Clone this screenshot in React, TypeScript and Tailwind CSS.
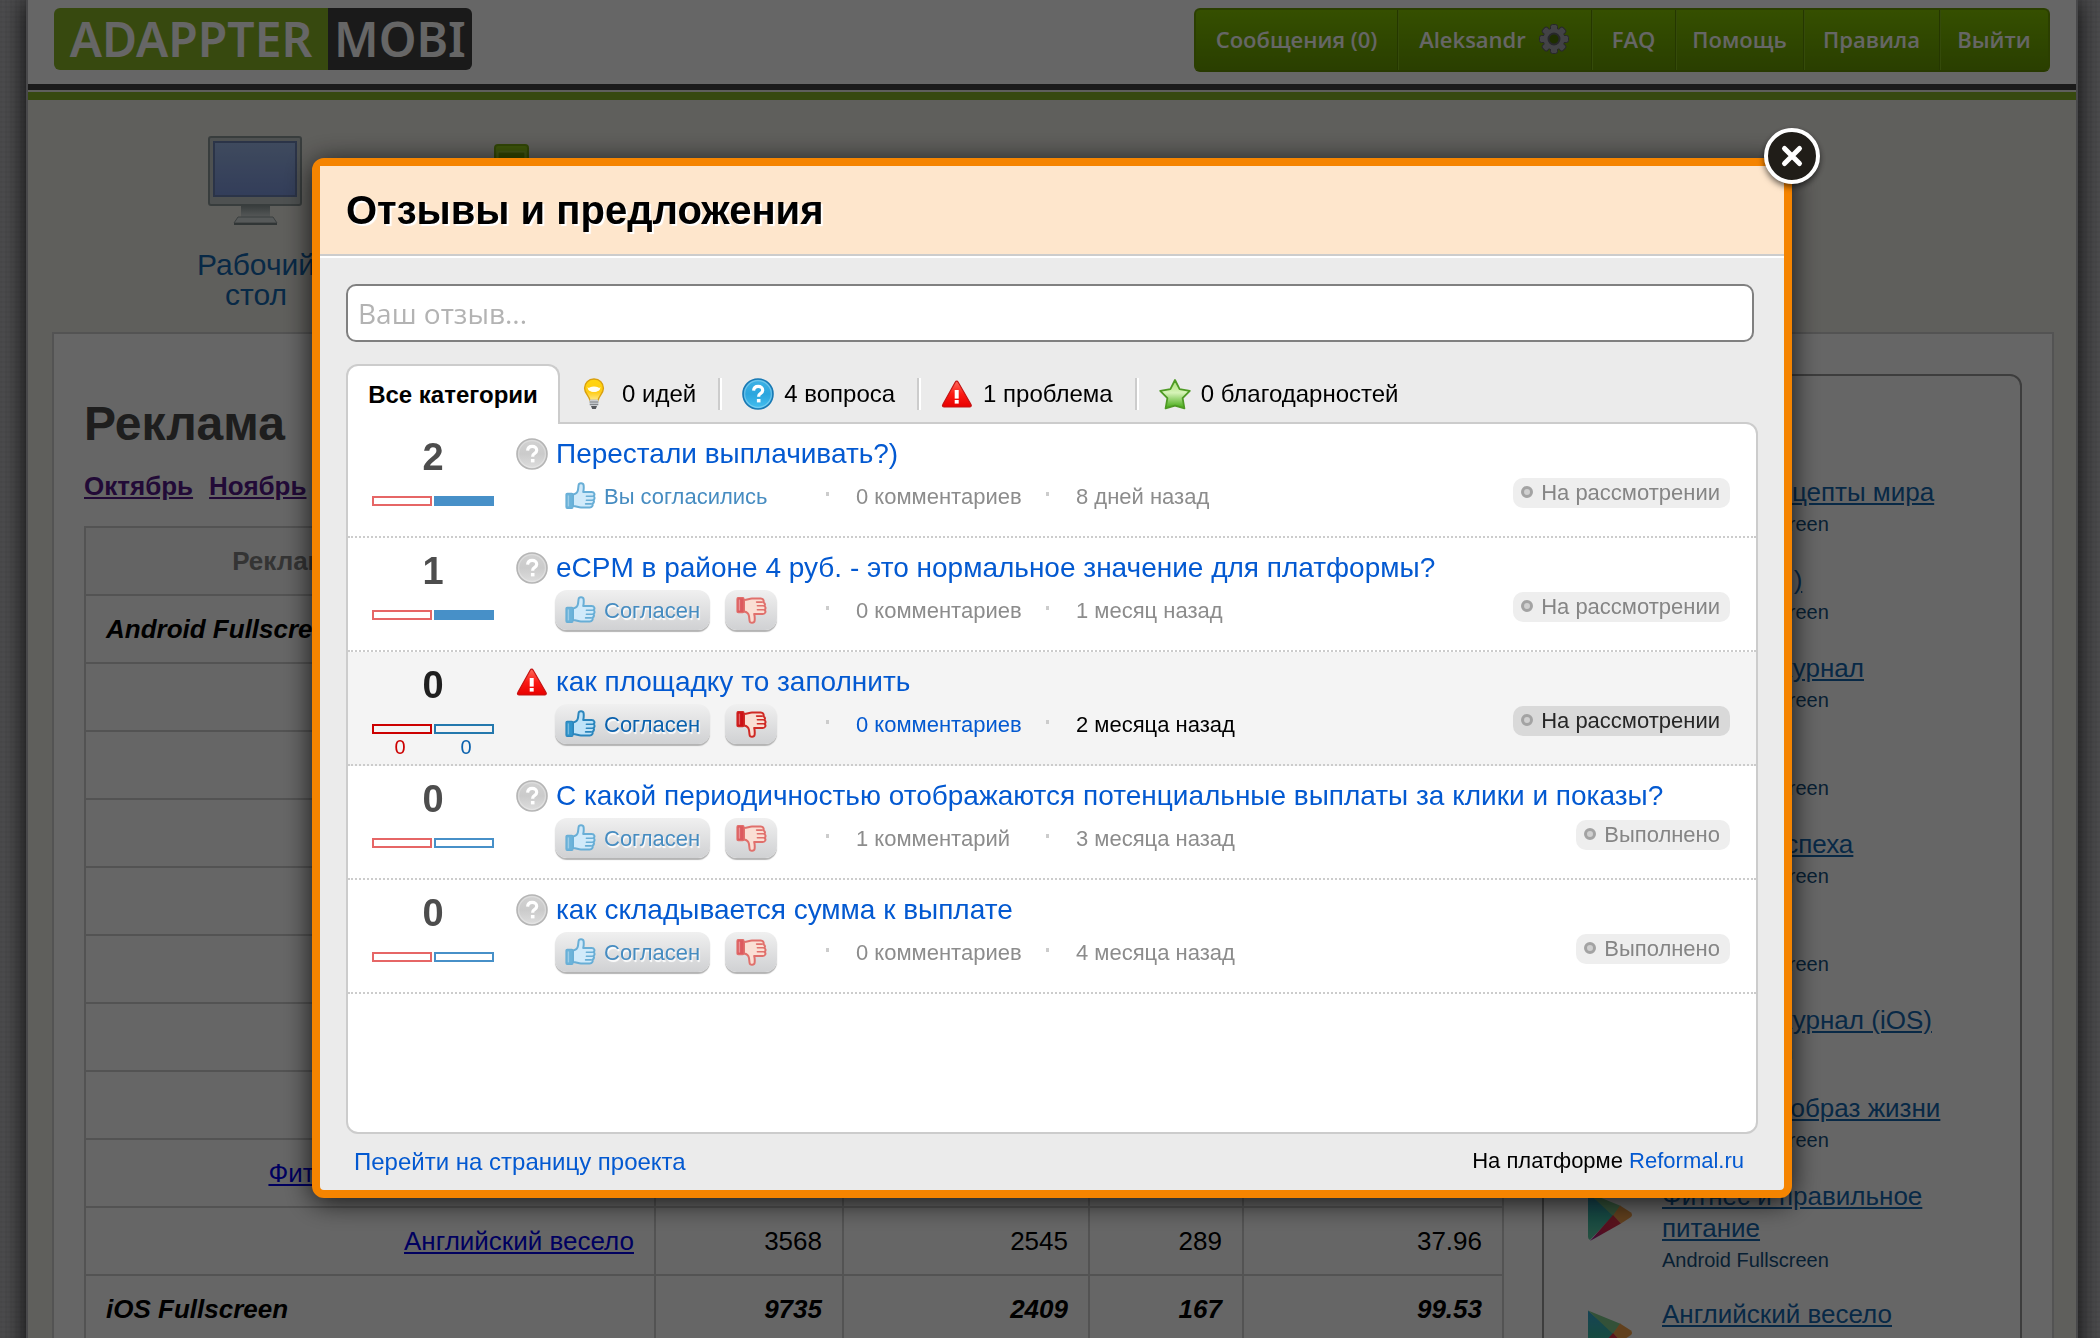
import { useState } from 'react';

type Category = 'question' | 'problem';

type Review = {
  votes: number;
  category: Category;
  title: string;
  comments: string;
  date: string;
  status: string;
  agreed?: boolean;
  active?: boolean;
};

const reviews: Review[] = [
  { votes: 2, category: 'question', title: 'Перестали выплачивать?)', comments: '0 комментариев', date: '8 дней назад', status: 'На рассмотрении', agreed: true },
  { votes: 1, category: 'question', title: 'eCPM в районе 4 руб. - это нормальное значение для платформы?', comments: '0 комментариев', date: '1 месяц назад', status: 'На рассмотрении' },
  { votes: 0, category: 'problem', title: 'как площадку то заполнить', comments: '0 комментариев', date: '2 месяца назад', status: 'На рассмотрении', active: true },
  { votes: 0, category: 'question', title: 'С какой периодичностью отображаются потенциальные выплаты за клики и показы?', comments: '1 комментарий', date: '3 месяца назад', status: 'Выполнено' },
  { votes: 0, category: 'question', title: 'как складывается сумма к выплате', comments: '0 комментариев', date: '4 месяца назад', status: 'Выполнено' },
];

const apps = [
  { name: 'Лучшие рецепты мира', platform: 'Android Fullscreen' },
  { name: 'Анекдоты :)', platform: 'Android Fullscreen' },
  { name: 'Женский журнал', platform: 'Android Fullscreen' },
  { name: '', platform: 'Android Fullscreen' },
  { name: 'Секреты успеха', platform: 'Android Fullscreen' },
  { name: '', platform: 'Android Fullscreen' },
  { name: 'Женский журнал (iOS)', platform: 'iOS Fullscreen' },
  { name: 'Здоровый образ жизни', platform: 'Android Fullscreen' },
  { name: 'Фитнес и правильное питание', platform: 'Android Fullscreen' },
  { name: 'Английский весело', platform: 'Android Fullscreen' },
];

// Статистика по площадкам: показы, клики и т.д.
const stats = [
  { name: '', values: ['', '', '', ''] },
  { name: '', values: ['', '', '', ''] },
  { name: '', values: ['', '', '', ''] },
  { name: '', values: ['', '', '', ''] },
  { name: '', values: ['', '', '', ''] },
  { name: '', values: ['', '', '', ''] },
  { name: '', values: ['', '', '', ''] },
  { name: 'Фитнес и правильное питание', values: ['', '', '', ''] },
  { name: 'Английский весело', values: ['3568', '2545', '289', '37.96'] },
];

/* ---------- Иконки ---------- */

function QuestionIcon({ muted = false }: { muted?: boolean }) {
  const id = muted ? 'q-muted' : 'q-blue';
  return (
    <svg className="w-8 h-8 shrink-0" viewBox="0 0 32 32" aria-hidden="true">
      <defs>
        <linearGradient id={id} x1="0" y1="0" x2="0" y2="1">
          <stop offset="0" stopColor={muted ? '#d2d2d2' : '#3fb4e6'} />
          <stop offset="0.5" stopColor={muted ? '#cbcbcb' : '#2ba5de'} />
          <stop offset="1" stopColor={muted ? '#dedede' : '#45c0f0'} />
        </linearGradient>
      </defs>
      <circle cx="16" cy="16" r="15" fill={`url(#${id})`} stroke={muted ? '#b5b5b5' : '#1879b4'} strokeWidth="1.6" />
      <circle cx="16" cy="16" r="13.4" fill="none" stroke="#fff" strokeOpacity="0.25" strokeWidth="1.4" />
      <path d="M11.6 12.6c.2-2.700 2-4.200 4.600-4.200 2.600 0 4.500 1.500 4.500 3.800 0 1.700-.9 2.600-2.300 3.500-1.300.8-1.700 1.300-1.700 2.600v.5" fill="none" stroke="#fff" strokeWidth="3.200" />
      <rect x="14.900" y="21" width="3.600" height="3.400" fill="#fff" />
    </svg>
  );
}

function ProblemIcon() {
  return (
    <svg className="w-8 h-8 shrink-0" viewBox="0 0 32 32" aria-hidden="true">
      <defs>
        <linearGradient id="warn" x1="0" y1="0" x2="0" y2="1">
          <stop offset="0" stopColor="#ff6a5a" />
          <stop offset="0.5" stopColor="#fb1a14" />
          <stop offset="1" stopColor="#e80000" />
        </linearGradient>
      </defs>
      <path d="M14.200 4.200c.8-1.400 2.200-1.400 3 0l12.800 22.300c.7 1.300 0 2.500-1.400 2.500H3.200c-1.500 0-2.200-1.200-1.400-2.500z" fill="url(#warn)" stroke="#c31414" strokeWidth="1.200" />
      <rect x="13.700" y="12" width="4" height="8.600" fill="#fff" />
      <rect x="13.700" y="22" width="4" height="3.600" fill="#fff" />
    </svg>
  );
}

function BulbIcon() {
  return (
    <svg className="w-8 h-8 shrink-0" viewBox="0 0 32 32" aria-hidden="true">
      <defs>
        <linearGradient id="bulb" x1="0" y1="0" x2="0" y2="1">
          <stop offset="0" stopColor="#ffd60a" />
          <stop offset="0.6" stopColor="#ffcb14" />
          <stop offset="1" stopColor="#ffe98a" />
        </linearGradient>
      </defs>
      <path d="M16 1c5.600 0 9.400 4 9.400 9.200 0 5.400-4.700 7.600-5.400 12.300h-8C11.300 17.800 6.600 15.600 6.600 10.200 6.600 5 10.400 1 16 1z" fill="url(#bulb)" stroke="#d9a010" strokeWidth="1.400" />
      <path d="M9.600 9c0 3.600 3 5 6.400 5s6.400-1.400 6.400-5c-1.400 1.600-3.400 2.400-6.400 2.400S11 10.600 9.600 9z" fill="#fffbe0" />
      <ellipse cx="16" cy="11" rx="5.600" ry="2.600" fill="#fffdf0" />
      <rect x="11.600" y="21.600" width="8.800" height="6.400" rx="1" fill="#c9ccd0" />
      <path d="M11.600 24h8.800M11.800 26.400h8.400" stroke="#7d8084" strokeWidth="1" />
      <path d="M13 28h6l-1.200 3h-3.600z" fill="#55585c" />
    </svg>
  );
}

function StarIcon() {
  return (
    <svg className="w-8 h-8 shrink-0" viewBox="0 0 32 32" aria-hidden="true">
      <defs>
        <linearGradient id="star" x1="0" y1="0" x2="0" y2="1">
          <stop offset="0" stopColor="#a6e070" />
          <stop offset="0.45" stopColor="#d6f3b8" />
          <stop offset="1" stopColor="#3fa80e" />
        </linearGradient>
      </defs>
      <path d="M16 2l4.600 9.200 10.200 1.600-7.200 7.400 1.800 10.200L16 27.600 6.600 30.400l1.800-10.200L1.200 12.800l10.200-1.600z" fill="url(#star)" stroke="#4e9a24" strokeWidth="1.800" strokeLinejoin="round" />
    </svg>
  );
}

// Большой палец: cuff — манжет, hand — ладонь
function ThumbIcon({ down = false, active = false }: { down?: boolean; active?: boolean }) {
  const cuff = down ? (active ? '#cc1015' : '#dd5a5e') : active ? '#2f94cb' : '#6bb3da';
  const line = down ? (active ? '#cf2a25' : '#e0706c') : active ? '#2b86bd' : '#68aed6';
  const hand = down ? '#fadfd4' : active ? '#bfe3f8' : '#d0eafa';
  return (
    <svg className={down ? 'w-8 h-8 shrink-0 -scale-y-100' : 'w-8 h-8 shrink-0'} viewBox="0 0 32 32" aria-hidden="true">
      <path d="M9 14.400c2.800-.4 4.600-2.200 5-4.600l.6-4.800c.3-2.400 4.600-2.400 5 .2.300 2.600.2 4.600-.4 6.800h8.600c2.600 0 3.400 2.700 1.800 4 1.400 1.200 1.200 3-.2 4 1 1.200.6 3-.9 3.700.6 1.800-.4 3.700-2.700 3.700H17c-3 0-4.600-1.400-8-1.400z" fill={hand} stroke={line} strokeWidth="2" strokeLinejoin="round" />
      <path d="M22.400 16.200h6M22.400 20.200h6M21.600 23.900h5.600" stroke={line} strokeWidth="1.600" strokeLinecap="round" />
      <path d="M2 14.600c0-.8.500-1.200 1.200-1.200h4.600c.8 0 1.200.5 1.200 1.200v12.400c0 .8-.5 1.400-1.200 1.400H3.200c-.7 0-1.200-.5-1.200-1.300z" fill={cuff} stroke={line} strokeWidth="1.200" />
      <path d="M4.400 15.400v11" stroke="#fff" strokeOpacity="0.35" strokeWidth="1.400" />
    </svg>
  );
}

function PlayIcon() {
  return (
    <svg className="w-16 h-16 shrink-0" viewBox="0 0 64 64" aria-hidden="true">
      <defs>
        <linearGradient id="play-left" x1="0" y1="0" x2="0" y2="1">
          <stop offset="0" stopColor="#36a7d8" />
          <stop offset="0.5" stopColor="#38b9a6" />
          <stop offset="1" stopColor="#5fc9a0" />
        </linearGradient>
        <linearGradient id="play-bottom" x1="0" y1="1" x2="1" y2="0">
          <stop offset="0" stopColor="#8a1fa0" />
          <stop offset="0.4" stopColor="#d3234f" />
          <stop offset="1" stopColor="#e63a44" />
        </linearGradient>
      </defs>
      <path d="M10 12.500L36 35 12 60q-2-1-2-3z" fill="url(#play-left)" />
      <path d="M10 12.500L43 26 35 36z" fill="#7fcb8d" />
      <path d="M42 25.500l11 7q2 2.500 0 4.500l-10 6.500-8-8z" fill="#f3a14a" />
      <path d="M35 35l8 8.500L12 61z" fill="url(#play-bottom)" />
    </svg>
  );
}

function DesktopIcon() {
  return (
    <svg className="w-24 h-24" viewBox="0 0 96 96" aria-hidden="true">
      <defs>
        <linearGradient id="screen" x1="0" y1="0" x2="0" y2="1">
          <stop offset="0" stopColor="#9db9ea" />
          <stop offset="1" stopColor="#7f9ae0" />
        </linearGradient>
        <linearGradient id="stand" x1="0" y1="0" x2="0" y2="1">
          <stop offset="0" stopColor="#8f9b9b" />
          <stop offset="1" stopColor="#d5dcdc" />
        </linearGradient>
      </defs>
      <rect x="1" y="1" width="92" height="68" rx="2" fill="#c3cbcb" stroke="#8d9999" strokeWidth="2" />
      <rect x="6" y="6" width="82" height="54" fill="url(#screen)" stroke="#6d82b4" strokeWidth="2" />
      <path d="M33 70h29v11H33z" fill="url(#stand)" />
      <path d="M30 81h35l4 6H26z" fill="#d9e0e0" stroke="#929d9d" />
      <rect x="26" y="87" width="43" height="2" fill="#7c8787" />
    </svg>
  );
}

function BatteryIcon() {
  return (
    <svg className="w-24 h-24" viewBox="0 0 96 96" aria-hidden="true">
      <rect x="31" y="9" width="33" height="80" rx="3" fill="#9ad41a" stroke="#7cb010" strokeWidth="2" />
      <rect x="34" y="16" width="27" height="70" fill="#7bb000" stroke="#b2e048" />
    </svg>
  );
}

function GearIcon() {
  return (
    <svg className="w-8 h-8 shrink-0" viewBox="0 0 32 32" aria-hidden="true">
      <g fill="#a9a9b0" stroke="#63636b" strokeWidth="1">
        {[0, 45, 90, 135, 180, 225, 270, 315].map((angle) => (
          <rect key={angle} x="12.500" y="1.500" width="7" height="9" rx="2" transform={`rotate(${angle} 16 16)`} />
        ))}
      </g>
      <circle cx="16" cy="16" r="10.500" fill="#a9a9b0" />
      <circle cx="16" cy="16" r="5.500" fill="#4b7400" stroke="#63636b" strokeWidth="2" />
    </svg>
  );
}

/* ---------- Страница под окном ---------- */

function Header() {
  const link = "flex items-center justify-center pb-0.5 border-r border-[#5c8a00] shadow-[1px_0_0_#86bb1a] last:border-r-0 last:shadow-none";
  return (
    <header>
      <div className="flex items-start justify-between h-[84px] px-[26px] pt-2 bg-white">
        <a href="#home" className="flex h-[62px] font-['Noto_Sans',sans-serif] text-[48px] font-semibold leading-[62px] text-white">
          <span className="w-[274px] rounded-l-md bg-[#8ab626] text-center">ADAPPTER</span>
          <span className="w-36 rounded-r-md bg-[#414141] text-center">MOBI</span>
        </a>
        <nav className="flex h-16 rounded-md overflow-hidden border-2 border-t-[#6d9d00] border-x-[#6d9d00] border-b-[#659000] bg-gradient-to-b from-[#85c600] to-[#699d00] font-['Open_Sans',sans-serif] text-[22px] font-semibold text-white">
          <a href="#messages" className={`${link} w-[202px]`}>Сообщения (0)</a>
          <a href="#profile" className={`${link} w-[194px] gap-3`}>
            Aleksandr
            <GearIcon />
          </a>
          <a href="#faq" className={`${link} w-[84px]`}>FAQ</a>
          <a href="#help" className={`${link} w-32`}>Помощь</a>
          <a href="#rules" className={`${link} w-[136px]`}>Правила</a>
          <a href="#logout" className={`${link} w-[108px]`}>Выйти</a>
        </nav>
      </div>
      <div className="h-1.5 bg-[#414141]" />
      <div className="h-2 mt-0.5 bg-[#8ab626]" />
    </header>
  );
}

function StatsTable() {
  const cell = 'border-2 border-[#cfcfcf] px-5';
  return (
    <table className="w-full mt-6 table-fixed border-collapse text-[26px] leading-8 text-black">
      <colgroup>
        <col />
        <col className="w-[188px]" />
        <col className="w-[246px]" />
        <col className="w-[154px]" />
        <col className="w-[260px]" />
      </colgroup>
      <thead>
        <tr className="h-[68px] text-[#828282] bg-[#fafafa]">
          <th className={cell}>Рекламная площадка</th>
          <th className={cell} />
          <th className={cell} />
          <th className={cell} />
          <th className={cell} />
        </tr>
      </thead>
      <tbody>
        <tr className="h-[68px] font-bold italic">
          <td className={cell}>Android Fullscreen</td>
          <td className={cell} />
          <td className={cell} />
          <td className={cell} />
          <td className={cell} />
        </tr>
        {stats.map((row, rowIndex) => (
          <tr key={rowIndex} className="h-[68px] text-right">
            <td className={`${cell} whitespace-nowrap`}>
              {row.name && <a href="#app" className="text-[#0000ee] underline">{row.name}</a>}
            </td>
            {row.values.map((value, index) => (
              <td key={index} className={cell}>{value}</td>
            ))}
          </tr>
        ))}
        <tr className="h-[68px] font-bold italic text-right">
          <td className={`${cell} text-left`}>iOS Fullscreen</td>
          <td className={cell}>9735</td>
          <td className={cell}>2409</td>
          <td className={cell}>167</td>
          <td className={cell}>99.53</td>
        </tr>
      </tbody>
    </table>
  );
}

function Page() {
  return (
    <div className="min-h-screen ml-[26px] mr-[22px] border-x-2 border-[#b4b4b8] bg-[#eeede6] shadow-[0_0_24px_rgba(0,0,0,0.9)]">
      <Header />
      <div className="flex h-[232px] pt-9 pl-[100px] text-center text-3xl leading-[30px] text-[#1467b0]">
        <a href="#desktop" className="flex flex-col items-center w-64 gap-[18px]">
          <DesktopIcon />
          <span>Рабочий<br />стол</span>
        </a>
        <a href="#apps" className="flex flex-col items-center w-64" aria-label="Площадки">
          <BatteryIcon />
        </a>
      </div>
      <main className="flex gap-[38px] ml-6 mr-[22px] px-[30px] pt-10 border-2 border-[#cfcfcf] bg-white">
        <section className="flex-1 min-w-0 pt-5">
          <h1 className="text-5xl leading-[60px] font-bold text-[#4b4b4b]">Реклама</h1>
          <p className="flex gap-4 mt-4 text-[26px] leading-8 font-bold text-[#551a8b]">
            <a href="#october" className="underline">Октябрь</a>
            <a href="#november" className="underline">Ноябрь</a>
          </p>
          <StatsTable />
        </section>
        <aside className="w-[480px] shrink-0 pt-[100px] pl-[34px] pr-16 border-2 border-[#999] rounded-xl text-[#1467b0]">
          <ul className="flex flex-col gap-6">
            {apps.map((app, index) => (
              <li key={index} className="flex gap-5">
                <PlayIcon />
                <div>
                  <a href="#app" className="block min-h-8 text-[26px] leading-8 underline">{app.name}</a>
                  <span className="block pt-0.5 text-[20px] leading-7 text-[#14507f]">{app.platform}</span>
                </div>
              </li>
            ))}
          </ul>
        </aside>
      </main>
    </div>
  );
}

/* ---------- Окно отзывов ---------- */

function Tabs() {
  const tab = 'flex items-center gap-2.5 h-8 px-[22px] border-l-2 border-[#ccc] shadow-[inset_2px_0_0_#fff]';
  return (
    <div className="relative flex items-center h-[60px] mt-[22px] -mb-0.5 text-2xl text-black" role="tablist">
      <button type="button" role="tab" aria-selected="true" className="h-[60px] w-[214px] border-2 border-b-0 border-[#ccc] rounded-t-xl bg-white font-bold">
        Все категории
      </button>
      <button type="button" role="tab" aria-selected="false" className="flex items-center gap-3 h-8 pl-[18px] pr-[22px]">
        <BulbIcon />
        0 идей
      </button>
      <button type="button" role="tab" aria-selected="false" className={tab}>
        <QuestionIcon />
        4 вопроса
      </button>
      <button type="button" role="tab" aria-selected="false" className={tab}>
        <ProblemIcon />
        1 проблема
      </button>
      <button type="button" role="tab" aria-selected="false" className={tab}>
        <StarIcon />
        0 благодарностей
      </button>
    </div>
  );
}

function VoteBars({ votes, active }: { votes: number; active?: boolean }) {
  return (
    <div className="w-[122px] shrink-0 pt-3 text-center">
      <div className={`h-10 leading-[42px] text-[38px] font-bold ${active ? 'text-[#1f1f1f]' : 'text-[#4d4d4d]'}`}>{votes}</div>
      <div className="flex gap-0.5 mt-5">
        <span className={`w-[60px] h-2.5 border-2 ${active ? 'border-[#cc0000]' : 'border-[#e66666]'}`} />
        <span
          className={`w-[60px] h-2.5 border-2 ${active ? 'border-[#2478ad]' : 'border-[#4790c8]'} ${votes > 0 ? 'bg-[#4790c8]' : ''}`}
        />
      </div>
      {active && (
        <div className="flex justify-center gap-[55px] text-xl leading-[26px]">
          <span className="text-[#cc0000]">0</span>
          <span className="text-[#0a61ad]">0</span>
        </div>
      )}
    </div>
  );
}

function ReviewRow({ review }: { review: Review }) {
  const { active } = review;
  const button =
    'flex items-center h-10 rounded-xl bg-gradient-to-b from-[#f0f0f0] to-[#d0d1d3] shadow-[0_2px_1px_#b4b4b4] [text-shadow:1px_2px_1px_#fff]';
  return (
    <li className={`flex gap-[22px] h-[114px] pl-6 pr-[26px] border-b-2 border-dotted border-[#ccc] ${active ? 'bg-[#f4f4f4]' : ''}`}>
      <VoteBars votes={review.votes} active={active} />
      <div className="flex-1 min-w-0 pt-3.5">
        <div className="flex items-center gap-2 h-8">
          {review.category === 'problem' ? <ProblemIcon /> : <QuestionIcon muted />}
          <a href="#review" className="text-[28px] leading-8 whitespace-nowrap text-[#0359d1]">{review.title}</a>
        </div>
        <div className={`flex items-center h-10 mt-1.5 pl-[39px] text-[22px] ${active ? 'text-black' : 'text-[#8c8c8c]'}`}>
          <div className={`flex items-center gap-[15px] w-[271px] ${active ? 'text-[#0a61ad]' : 'text-[#468cc1]'}`}>
            {review.agreed ? (
              <span className="flex items-center gap-2 pl-[9px]">
                <ThumbIcon />
                Вы согласились
              </span>
            ) : (
              <>
                <button type="button" className={`${button} gap-2 pl-[9px] pr-2.5`}>
                  <ThumbIcon active={active} />
                  Согласен
                </button>
                <button type="button" aria-label="Не согласен" className={`${button} px-2.5`}>
                  <ThumbIcon down active={active} />
                </button>
              </>
            )}
          </div>
          <div className="flex items-center gap-[27px] w-[220px]">
            <span className="w-[3px] h-1 mb-1 bg-[#ccc]" />
            <a href="#comments" className={active ? 'text-[#0359d1]' : ''}>{review.comments}</a>
          </div>
          <div className="flex items-center gap-[27px]">
            <span className="w-[3px] h-1 mb-1 bg-[#ccc]" />
            <span>{review.date}</span>
          </div>
          <span
            className={`flex items-center gap-2 h-[30px] ml-auto mt-0.5 pb-0.5 self-start pl-2 pr-2.5 rounded-[10px] ${
              active ? 'bg-[#d9d9d9] text-[#262626]' : 'bg-[#eee] text-[#858585]'
            }`}
          >
            <span className="w-3 h-3 rounded-full border-[3px] border-[#a3a3a3] bg-[#d0d0d0]" />
            {review.status}
          </span>
        </div>
      </div>
    </li>
  );
}

function FeedbackDialog({ onClose }: { onClose: () => void }) {
  const [text, setText] = useState('');
  return (
    <div className="fixed inset-0 flex items-start justify-center pt-[158px] pl-1 bg-black/60">
      <div
        role="dialog"
        aria-label="Отзывы и предложения"
        className="relative w-[1480px] border-8 border-[#f58400] rounded-xl bg-[#ebebeb] shadow-[0_4px_28px_rgba(0,0,0,0.8)]"
      >
        <button
          type="button"
          aria-label="Закрыть"
          onClick={onClose}
          className="absolute -top-[38px] -right-9 flex items-center justify-center w-14 h-14 rounded-full border-4 border-white bg-[#201d18] shadow-[0_3px_6px_rgba(0,0,0,0.6)]"
        >
          <svg className="w-6 h-6" viewBox="0 0 24 24" fill="none" stroke="#fff" strokeWidth="5" strokeLinecap="round" aria-hidden="true">
            <path d="M4.500 4.500l15 15M19.500 4.500l-15 15" />
          </svg>
        </button>
        <div className="flex items-center h-[90px] pl-[26px] border-b-2 border-[#ccc] bg-[#fee6cc]">
          <h2 className="text-[40px] leading-[44px] font-bold text-black [text-shadow:2px_2px_1px_#fff]">Отзывы и предложения</h2>
        </div>
        <div className="px-[26px] pt-[26px] border-t-2 border-white">
          <div className="pr-1">
            <input
              type="text"
              aria-label="Ваш отзыв"
              placeholder="Ваш отзыв..."
              value={text}
              onChange={(e) => setText(e.target.value)}
              className="block w-full h-[58px] px-2.5 border-2 border-[#808080] rounded-[10px] bg-white font-['Open_Sans',sans-serif] text-[28px] text-black placeholder:text-[#b3b3b3]"
            />
          </div>
          <Tabs />
          <ul className="min-h-[712px] border-2 border-[#ccc] rounded-xl rounded-tl-none bg-white">
            {reviews.map((review) => (
              <ReviewRow key={review.title} review={review} />
            ))}
          </ul>
          <div className="flex items-center justify-between h-14 pl-2 pr-3.5 text-black">
            <a href="#project" className="text-2xl text-[#0359d1]">Перейти на страницу проекта</a>
            <p className="pb-1 text-[22px]">
              На платформе <a href="#reformal" className="text-[#0359d1]">Reformal.ru</a>
            </p>
          </div>
        </div>
      </div>
    </div>
  );
}

export default function App() {
  const [open, setOpen] = useState(true);
  return (
    <div className="h-screen overflow-hidden bg-[#c0c0c4] bg-[repeating-linear-gradient(0deg,rgba(0,0,0,0.03)_0_2px,transparent_2px_5px),repeating-linear-gradient(90deg,rgba(0,0,0,0.03)_0_2px,transparent_2px_5px)] font-['Liberation_Sans',sans-serif]">
      <Page />
      {open && <FeedbackDialog onClose={() => setOpen(false)} />}
    </div>
  );
}
